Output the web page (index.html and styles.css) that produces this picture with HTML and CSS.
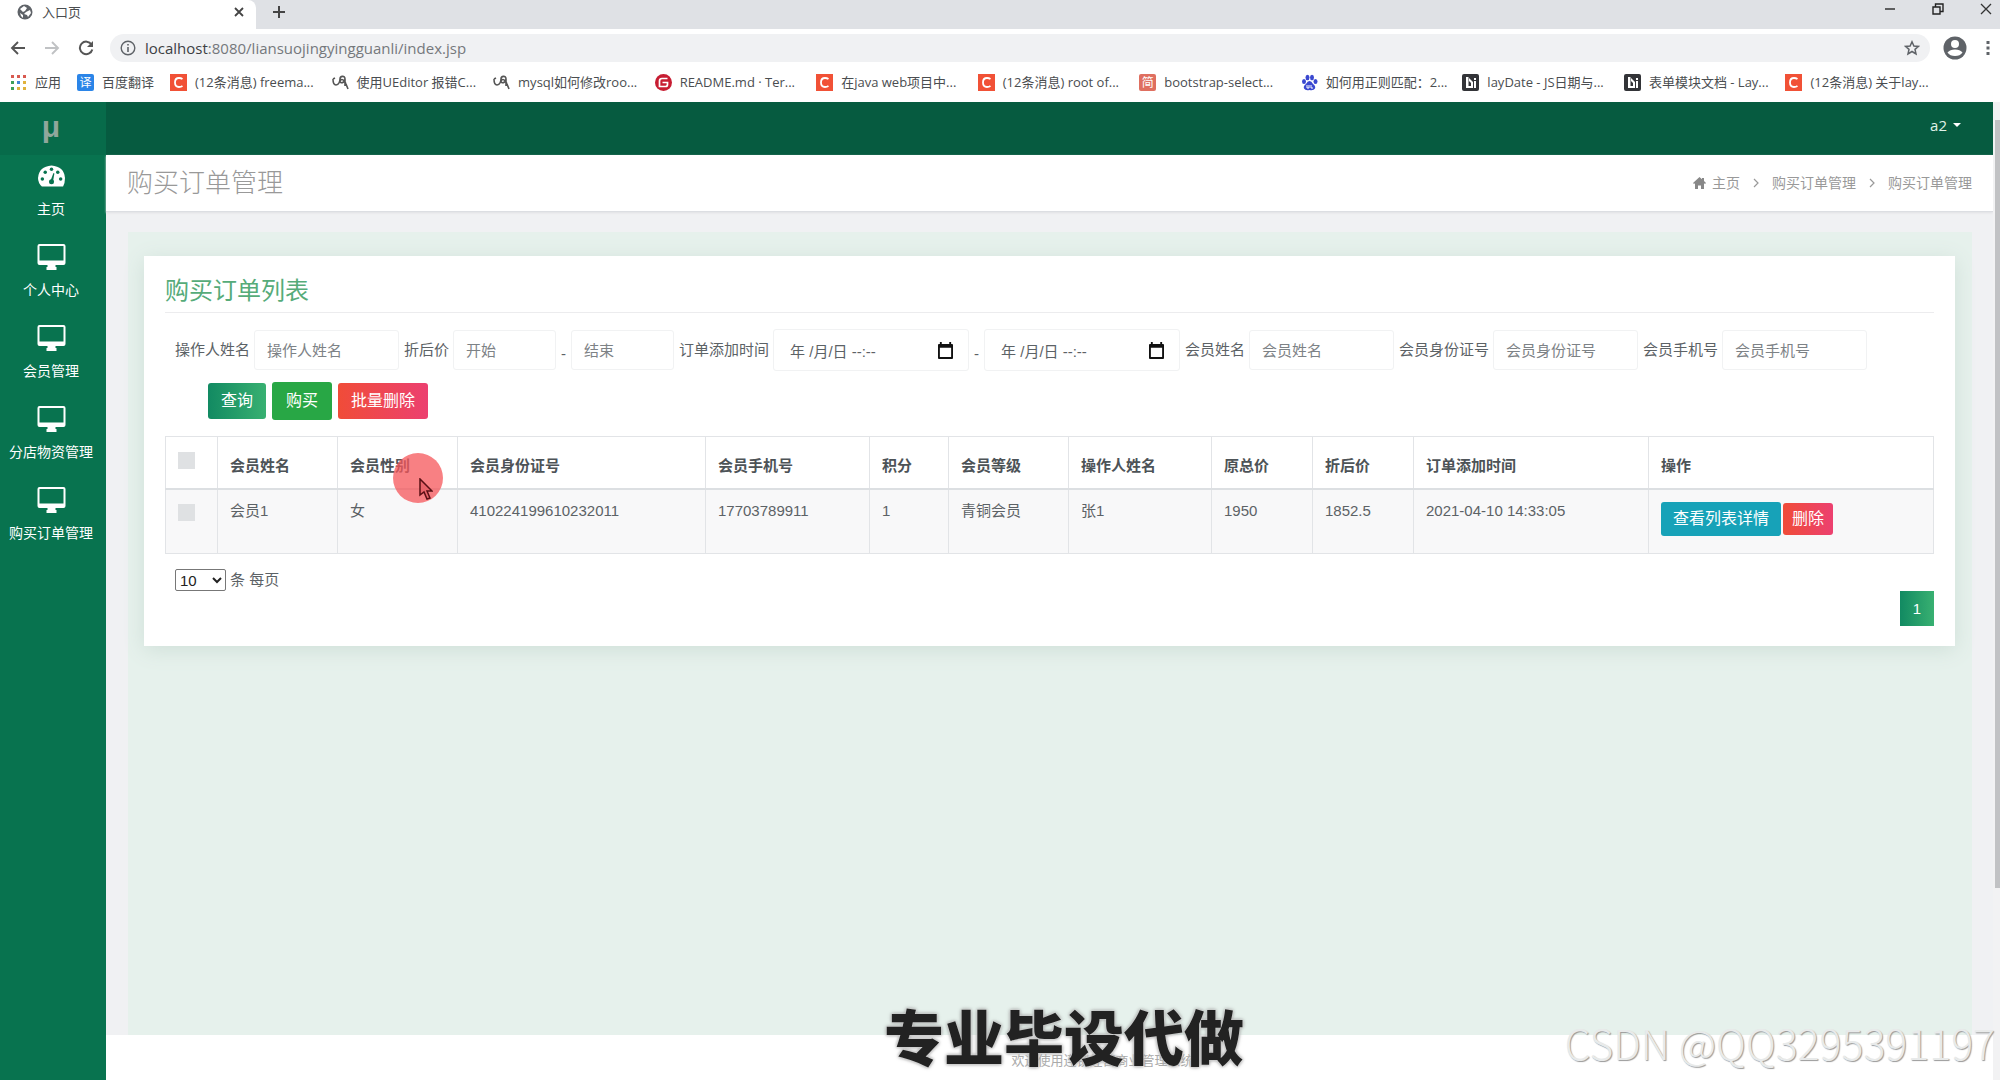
FILE: index.html
```html
<!DOCTYPE html>
<html lang="zh-CN">
<head>
<meta charset="utf-8">
<title>入口页</title>
<link rel="stylesheet" href="styles.css">
</head>
<body>
<svg class="defs" aria-hidden="true">
  <symbol id="monitor" viewBox="0 0 28 26"><path fill="currentColor" fill-rule="evenodd" d="M2 0H26Q28 0 28 2V19Q28 21 26 21H18V23H19V26H9V23H10V21H2Q0 21 0 19V2Q0 0 2 0ZM2 2V16.500H26V2Z"/></symbol>
  <symbol id="calendar" viewBox="0 0 16 18"><path fill="currentColor" fill-rule="evenodd" d="M2 0H4V2H12V0H14V2H15Q16 2 16 3V17Q16 18 15 18H1Q0 18 0 17V3Q0 2 1 2H2ZM2 6V16H14V6Z"/></symbol>
  <symbol id="csdn" viewBox="0 0 17 17"><rect width="17" height="17" fill="#f15136"/><path d="M12.500 5Q11 4 9 4Q5 4 5 8.500Q5 13 9 13Q11 13 12.500 12" fill="none" stroke="#fff" stroke-width="1.800"/></symbol>
  <symbol id="oschina" viewBox="0 0 17 17"><path d="M1 5C1 9 2 11 4 11C7 11 8 7 8 5C8 2 13 1 13 5C13 9 8 10 8 7M8 7C9 4 13 6 14 10L16 15M1 5L3 4M13 5V12" fill="none" stroke="#555" stroke-width="1.600"/></symbol>
  <symbol id="layui" viewBox="0 0 17 17"><rect width="17" height="17" rx="2" fill="#333438"/><path d="M4 3H6.500V12H9V14H4ZM7 4L11 8V14H9V9L7 7ZM12 7H14V14H12ZM12 4H14V6H12Z" fill="#fff"/></symbol>
</svg>

<header class="browser">
  <div class="tabstrip">
    <div class="tab">
      <svg class="tab-icon" viewBox="0 0 16 16"><circle cx="8" cy="8" r="7.500" fill="#5f6368"/><path d="M7 2L3 5L6 8L8 7L10 4ZM9 8L13 6L14 9L11 13L10 11L7 10ZM3 9L6 11V14L4 12Z" fill="#fff"/></svg>
      <span class="tab-title">入口页</span>
      <button class="icon-btn" aria-label="关闭标签页"><svg width="10" height="10" viewBox="0 0 10 10"><path d="M1 1L9 9M9 1L1 9" stroke="#444" stroke-width="1.800"/></svg></button>
    </div>
    <button class="icon-btn new-tab" aria-label="新标签页"><svg width="14" height="14" viewBox="0 0 14 14"><path d="M7 1V13M1 7H13" stroke="#444" stroke-width="2"/></svg></button>
    <div class="window-btns">
      <button class="icon-btn" aria-label="最小化"><svg width="12" height="12" viewBox="0 0 12 12"><path d="M1 6H11" stroke="#333" stroke-width="1.500"/></svg></button>
      <button class="icon-btn" aria-label="还原"><svg width="12" height="12" viewBox="0 0 12 12"><path d="M1 4H8V11H1ZM3.500 4V1H11V8.500H8" fill="none" stroke="#222" stroke-width="1.400"/></svg></button>
      <button class="icon-btn" aria-label="关闭"><svg width="12" height="12" viewBox="0 0 12 12"><path d="M1 1L11 11M11 1L1 11" stroke="#333" stroke-width="1.300"/></svg></button>
    </div>
  </div>
  <div class="toolbar">
    <button class="icon-btn" aria-label="后退"><svg width="16" height="16" viewBox="0 0 16 16"><path d="M15 8H2M8 2L2 8L8 14" fill="none" stroke="#555" stroke-width="1.900"/></svg></button>
    <button class="icon-btn" aria-label="前进"><svg width="16" height="16" viewBox="0 0 16 16"><path d="M1 8H14M8 2L14 8L8 14" fill="none" stroke="#c0c2c4" stroke-width="1.900"/></svg></button>
    <button class="icon-btn" aria-label="刷新"><svg width="16" height="16" viewBox="0 0 16 16"><path d="M13.500 4.500A6.300 6.300 0 1 0 14.300 9.500" fill="none" stroke="#555" stroke-width="2"/><path d="M15 1V7H9Z" fill="#555"/></svg></button>
    <div class="address">
      <svg width="16" height="16" viewBox="0 0 16 16"><circle cx="8" cy="8" r="6.800" fill="none" stroke="#5f6368" stroke-width="1.400"/><path d="M8 7V12M8 4V5.600" stroke="#5f6368" stroke-width="1.600"/></svg>
      <span class="url"><b>localhost</b>:8080/liansuojingyingguanli/index.jsp</span>
      <button class="icon-btn" aria-label="收藏"><svg width="16" height="16" viewBox="0 0 16 16"><path d="M8 1.800L9.900 6L14.500 6.400L11 9.400L12 14L8 11.500L4 14L5 9.400L1.500 6.400L6.100 6Z" fill="none" stroke="#5f6368" stroke-width="1.500"/></svg></button>
    </div>
    <button class="icon-btn" aria-label="用户"><svg width="24" height="24" viewBox="0 0 24 24"><circle cx="12" cy="12" r="11.500" fill="#5f6368"/><circle cx="12" cy="8" r="4" fill="#fff"/><path d="M4.500 16.500Q7 13.500 12 13.500T19.500 16.500Q17 20 12 20T4.500 16.500Z" fill="#fff"/></svg></button>
    <button class="icon-btn" aria-label="菜单"><svg width="6" height="16" viewBox="0 0 6 16"><path d="M1.500 1H4.500V4H1.500ZM1.500 6.500H4.500V9.500H1.500ZM1.500 12H4.500V15H1.500Z" fill="#5f6368"/></svg></button>
  </div>
  <nav class="bookmarks" aria-label="书签">
    <a href="#" class="apps"><svg viewBox="0 0 17 17"><path d="M1 1H4V4H1ZM7 1H10V4H7ZM13 1H16V4H13Z" fill="#d85a50"/><path d="M1 7H4V10H1Z" fill="#3f9f58"/><path d="M7 7H10V10H7Z" fill="#4285d6"/><path d="M13 7H16V10H13ZM7 13H10V16H7ZM13 13H16V16H13Z" fill="#e0b23c"/><path d="M1 13H4V16H1Z" fill="#3f9f58"/></svg>应用</a>
    <a href="#" class="translate"><span class="badge blue">译</span>百度翻译</a>
    <div class="links">
      <a href="#"><svg><use href="#csdn"/></svg>(12条消息) freema...</a>
      <a href="#"><svg><use href="#oschina"/></svg>使用UEditor 报错C...</a>
      <a href="#"><svg><use href="#oschina"/></svg>mysql如何修改roo...</a>
      <a href="#"><svg viewBox="0 0 17 17"><circle cx="8.500" cy="8.500" r="8.500" fill="#c71d32"/><path d="M12.500 4.500H7Q4.500 4.500 4.500 7V12.500H10.500Q12.500 12.500 12.500 10.500V8.500H7.500" fill="none" stroke="#fff" stroke-width="1.700"/></svg>README.md · Ter...</a>
      <a href="#"><svg><use href="#csdn"/></svg>在java web项目中...</a>
      <a href="#"><svg><use href="#csdn"/></svg>(12条消息) root of...</a>
      <a href="#"><span class="badge salmon">简</span>bootstrap-select...</a>
      <a href="#"><svg viewBox="0 0 17 17" fill="#3a48d0"><ellipse cx="3" cy="7.500" rx="2" ry="2.500"/><ellipse cx="6.500" cy="3.500" rx="2" ry="2.700"/><ellipse cx="11" cy="3.500" rx="2" ry="2.700"/><ellipse cx="14.500" cy="7.500" rx="2" ry="2.500"/><path d="M8.500 7Q10.500 7 12 10Q15 12 14 14.500Q12.500 17 8.500 16Q4.500 17 3 14.500Q2 12 5 10Q6.500 7 8.500 7Z"/><path d="M6 11V14H8V11M10 11V14H12" fill="none" stroke="#fff"/></svg>如何用正则匹配：2...</a>
      <a href="#"><svg><use href="#layui"/></svg>layDate - JS日期与...</a>
      <a href="#"><svg><use href="#layui"/></svg>表单模块文档 - Lay...</a>
      <a href="#"><svg><use href="#csdn"/></svg>(12条消息) 关于lay...</a>
    </div>
  </nav>
</header>

<div class="app">
  <aside class="sidebar">
    <a class="logo" href="#">μ</a>
    <nav class="menu">
      <a href="#"><svg class="gauge" viewBox="0 0 28 22"><path fill="#fff" d="M4 22Q0 18 0 13Q1 1 14 0Q27 1 28 13Q28 18 26 22Z"/><g fill="#08734f"><circle cx="14" cy="4" r="1.800"/><circle cx="7.500" cy="7" r="1.800"/><circle cx="20.500" cy="7" r="1.800"/><circle cx="4.500" cy="14" r="1.800"/><circle cx="23.500" cy="14" r="1.800"/><circle cx="14" cy="17" r="2.600"/><path d="M13 16L16 8L17 8.300L15.500 17Z"/></g></svg>主页</a>
      <a href="#"><svg><use href="#monitor"/></svg>个人中心</a>
      <a href="#"><svg><use href="#monitor"/></svg>会员管理</a>
      <a href="#"><svg><use href="#monitor"/></svg>分店物资管理</a>
      <a href="#"><svg><use href="#monitor"/></svg>购买订单管理</a>
    </nav>
  </aside>
  <div class="page">
    <div class="topbar"><button class="user">a2 <span class="caret"></span></button></div>
    <div class="heading">
      <h1>购买订单管理</h1>
      <nav class="crumbs" aria-label="面包屑">
        <a href="#"><svg width="13" height="12" viewBox="0 0 13 12"><path fill="#888" d="M6.500 0L9 2.300V1H11V4L13 6L12 7L11 6.200V12H8V8.500H5V12H2V6.200L1 7L0 6Z"/></svg>主页</a>
        <svg width="6" height="10" viewBox="0 0 6 10"><path d="M1 1L5 5L1 9" fill="none" stroke="#999" stroke-width="1.200"/></svg>
        <a href="#">购买订单管理</a>
        <svg width="6" height="10" viewBox="0 0 6 10"><path d="M1 1L5 5L1 9" fill="none" stroke="#999" stroke-width="1.200"/></svg>
        <span>购买订单管理</span>
      </nav>
    </div>
    <main class="content">
      <div class="panel">
        <section class="card">
          <h2>购买订单列表</h2>
          <form class="filters">
            <div class="fields">
              <label for="op">操作人姓名</label><input id="op" type="text" placeholder="操作人姓名">
              <label for="p1">折后价</label><input id="p1" class="short" type="text" placeholder="开始"><span class="dash">-</span><input class="short" type="text" placeholder="结束" aria-label="折后价结束">
              <label for="t1">订单添加时间</label><span class="date"><input id="t1" type="text" value="年 /月/日 --:--"><svg><use href="#calendar"/></svg></span><span class="dash">-</span><span class="date"><input type="text" value="年 /月/日 --:--" aria-label="订单添加时间结束"><svg><use href="#calendar"/></svg></span>
              <label for="nm">会员姓名</label><input id="nm" type="text" placeholder="会员姓名">
              <label for="idn">会员身份证号</label><input id="idn" type="text" placeholder="会员身份证号">
              <label for="ph">会员手机号</label><input id="ph" type="text" placeholder="会员手机号">
            </div>
            <div class="actions">
              <button type="button" class="btn grad-green">查询</button>
              <button type="button" class="btn tall green">购买</button>
              <button type="button" class="btn grad-red">批量删除</button>
            </div>
          </form>
          <table>
            <colgroup><col class="c-check"><col class="c-name"><col class="c-name"><col class="c-id"><col class="c-phone"><col class="c-points"><col class="c-name"><col class="c-op"><col class="c-price"><col class="c-price"><col class="c-time"><col></colgroup>
            <thead><tr><th><input type="checkbox" aria-label="全选"></th><th>会员姓名</th><th>会员性别</th><th>会员身份证号</th><th>会员手机号</th><th>积分</th><th>会员等级</th><th>操作人姓名</th><th>原总价</th><th>折后价</th><th>订单添加时间</th><th>操作</th></tr></thead>
            <tbody><tr><td><input type="checkbox" aria-label="选择会员1"></td><td>会员1</td><td>女</td><td>410224199610232011</td><td>17703789911</td><td>1</td><td>青铜会员</td><td>张1</td><td>1950</td><td>1852.5</td><td>2021-04-10 14:33:05</td><td><div class="ops"><button class="btn small teal">查看列表详情</button><button class="btn small grad-red">删除</button></div></td></tr></tbody>
          </table>
          <div class="per-page"><select id="size" aria-label="每页条数"><option>10</option></select><label for="size">条 每页</label></div>
          <div class="pager"><button class="page-no">1</button></div>
        </section>
      </div>
    </main>
    <footer>欢迎使用连锁经营商业管理系统</footer>
  </div>
  <div class="scrollbar"><div class="thumb"></div></div>
</div>

<div class="pointer"><svg width="14" height="22" viewBox="0 0 14 22"><path d="M1 1V17L5 14L8 21L11 20L8 13H13Z" fill="#e8646a" stroke="#5a1015" stroke-width="1.500"/></svg></div>
<div class="caption">专业毕设代做</div>
<div class="watermark">CSDN @QQ3295391197</div>
</body>
</html>
```
FILE: styles.css
```css
* { box-sizing: border-box; }
body {
  margin: 0;
  min-height: 100vh;
  display: flex;
  flex-direction: column;
  position: relative;
  overflow: hidden;
  font: 15px/20px "Liberation Sans", "Noto Sans CJK SC", sans-serif;
  color: #5c6266;
  background: #fff;
}
a { color: inherit; text-decoration: none; }
button, input, select { font: inherit; color: inherit; }
.defs { display: none; }
.icon-btn { display: flex; align-items: center; justify-content: center; padding: 0; border: 0; background: none; }

/* browser frame */
.browser { font: 13px/18px "Open Sans", "Noto Sans CJK SC", sans-serif; color: #4a4d50; }
.tabstrip { display: flex; height: 29px; background: #dfe1e5; padding-bottom: 5px; }
.tab { display: flex; align-items: center; width: 256px; height: 29px; padding: 0 12px 5px 17px; background: #fff; border-radius: 0 8px 0 0; }
.tab-icon { width: 16px; height: 16px; margin-right: 9px; }
.tab-title { flex: 1; }
.new-tab { width: 46px; }
.window-btns { display: flex; gap: 36px; margin-left: auto; padding: 0 8px 6px 0; }
.toolbar { display: flex; align-items: center; gap: 18px; height: 38px; padding: 0 9px 0 10px; }
.address { display: flex; align-items: center; flex: 1; height: 28px; padding: 0 10px 0 10px; margin-right: -5px; margin-left: -2px; border-radius: 14px; background: #f0f1f3; }
.url { flex: 1; margin-left: 9px; font-size: 15px; color: #75787c; }
.url b { font-weight: 400; color: #3c4043; }
.bookmarks { display: flex; align-items: center; height: 35px; padding: 0 52px 5px 10px; }
.bookmarks a { display: flex; align-items: center; gap: 8px; white-space: nowrap; }
.bookmarks svg, .badge { flex: none; width: 17px; height: 17px; }
.apps { width: 67px; }
.translate { width: 93px; }
.links { flex: 1; display: grid; grid-template-columns: repeat(11, 1fr); margin-right: -52px; padding-right: 53px; }
.badge { border-radius: 2px; color: #fff; font-size: 12px; line-height: 17px; text-align: center; }
.blue { background: #2b85e8; }
.salmon { background: #df6f60; }

/* application frame */
.app { flex: 1; display: grid; grid-template-columns: 106px 1fr 7px; }
.sidebar { background: #08734f; color: #fff; font-size: 14px; }
.logo { display: block; height: 53px; padding-right: 4px; background: #076b4a; color: #8fa79c; font-weight: 700; font-size: 30px; line-height: 50px; text-align: center; }
.menu a { display: flex; flex-direction: column; align-items: center; gap: 10px; height: 81px; padding: 8px 4px 0 0; }
.menu svg { width: 29px; height: 26px; }
.menu .gauge { width: 27px; }
.page { display: flex; flex-direction: column; min-width: 0; background: #f0f1f3; }
.topbar { display: flex; justify-content: flex-end; height: 53px; background: #065b40; }
.user { display: flex; align-items: center; gap: 6px; margin-right: 32px; padding: 0 0 8px; border: 0; background: none; color: #e0f3ea; font: 15px/20px "Open Sans", sans-serif; }
.caret { border: 4px solid transparent; border-top-color: #fff; border-bottom: 0; }
.heading { display: flex; align-items: center; justify-content: space-between; height: 57px; padding: 0 21px; background: #fff; border-bottom: 1px solid #dcdee2; box-shadow: 0 1px 2px #e0e1e4; }
h1 { margin: 0; font-size: 26px; line-height: 36px; font-weight: 300; color: #999; }
.crumbs { display: flex; align-items: center; gap: 13px; font-size: 14px; color: #999; }
.crumbs a { display: flex; align-items: center; gap: 6px; }
.content { flex: 1; display: flex; padding: 20px 21px 0 22px; }
.panel { flex: 1; min-width: 0; padding: 24px 17px 0 16px; background: #e6f1ec; }
.card { padding: 16px 21px 20px; background: #fff; box-shadow: 0 4px 20px #cfdfd8; }
h2 { margin: 0; padding-bottom: 2px; border-bottom: 1px solid #ececee; font-size: 24px; line-height: 38px; font-weight: 400; color: #56ab79; }

/* search form */
.fields { display: flex; align-items: center; gap: 5px; padding: 17px 0 0 10px; white-space: nowrap; }
.fields label { margin-right: -1px; }
.fields input { width: 145px; height: 40px; padding: 0 12px; border: 1px solid #f1f2f3; border-radius: 3px; background: #fff; outline: 0; }
.fields input::placeholder { color: #7d8286; opacity: 1; }
.fields .short { width: 103px; }
.date { display: flex; align-items: center; position: relative; }
.fields .date input { width: 196px; height: 42px; padding-left: 16px; margin: -1px 0; }
.date svg { position: absolute; right: 16px; width: 15px; height: 17px; color: #111; }
.dash { padding-top: 8px; }
.actions { display: flex; align-items: center; gap: 6px; padding: 12px 0 16px 43px; }
.btn { height: 36px; padding: 0 13px; border: 0; border-radius: 3px; color: #fff; font-size: 16px; line-height: 20px; white-space: nowrap; }
.tall { height: 38px; padding: 0 14px; }
.green { background: #28a745; }
.grad-green { background: linear-gradient(90deg, #128a62, #38b071); }
.grad-red { background: linear-gradient(90deg, #f04c38, #ec4070); }
.teal { background: #17a2b8; }
.small { height: 32px; padding: 0 9px; }
.small.teal { height: 34px; padding: 0 12px; }

/* order table */
table { width: 100%; table-layout: fixed; border-collapse: collapse; }
th, td { border: 1px solid #e2e4e7; padding: 11px 12px; text-align: left; vertical-align: top; overflow: hidden; white-space: nowrap; }
th { height: 52px; padding-top: 19px; border-bottom: 2px solid #dcdfe2; color: #4d5357; }
th:first-child { padding-top: 15px; }
td { height: 65px; background: #f8f8f9; }
.c-check { width: 52px; }
.c-name { width: 120px; }
.c-id { width: 248px; }
.c-phone { width: 164px; }
.c-points { width: 79px; }
.c-op { width: 143px; }
.c-price { width: 101px; }
.c-time { width: 235px; }
input[type="checkbox"] { appearance: none; display: block; width: 17px; height: 17px; margin: 0; background: #dfe1e3; }
td input[type="checkbox"] { margin-top: 3px; }
.ops { display: flex; align-items: center; gap: 2px; padding-top: 1px; }

.per-page { display: flex; align-items: center; gap: 4px; padding: 15px 0 0 10px; }
.per-page select { width: 51px; height: 22px; padding: 0; border: 1px solid #777; border-radius: 2px; background: #fff; color: #222; }
.pager { display: flex; justify-content: flex-end; }
.page-no { width: 34px; height: 35px; padding: 0; border: 0; background: linear-gradient(90deg, #128a62, #38b071); color: #fff; }
footer { height: 45px; padding: 16px 0 0 106px; background: #fff; text-align: center; font-size: 13px; color: #aaa; }
.scrollbar { padding: 18px 0 0 2px; background: #f2f2f3; }
.thumb { height: 80%; background: #c1c2c4; }

/* overlays */
.pointer { position: absolute; left: 393px; top: 453px; width: 50px; height: 50px; padding: 25px 0 0 26px; border-radius: 50%; background: rgba(246, 85, 90, .75); line-height: 0; }
.caption { position: absolute; left: 884px; bottom: 11px; font: 900 60px/68px "Noto Sans CJK SC", sans-serif; color: #222; text-shadow: 0 0 2px #fff, 0 0 3px #888, 0 0 4px #aaa; white-space: nowrap; }
.watermark { position: absolute; right: 5px; bottom: 12px; font: 300 41px/52px "Noto Sans CJK SC", sans-serif; color: #e8eaea; text-shadow: 1px 1px 1px #999; white-space: nowrap; }
```
